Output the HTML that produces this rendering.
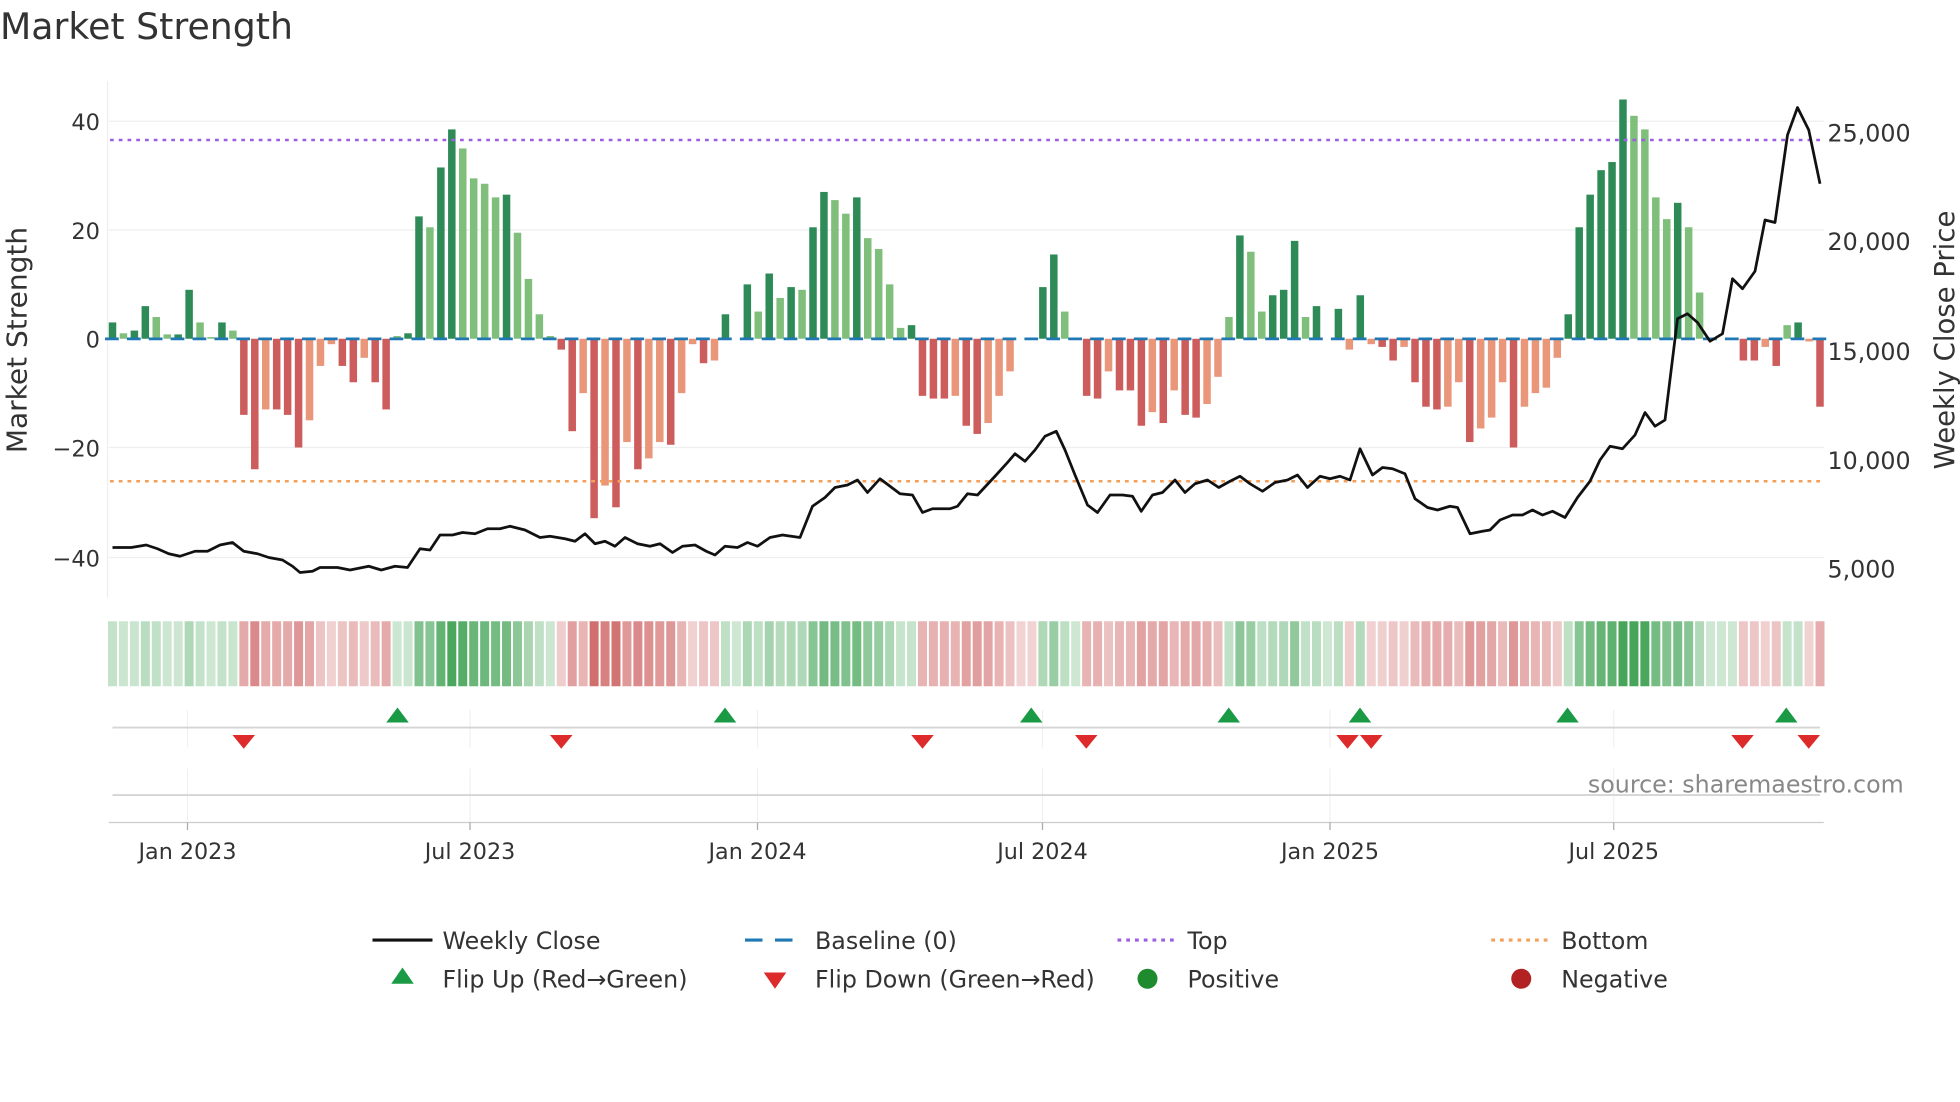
<!DOCTYPE html>
<html><head><meta charset="utf-8"><style>
html,body{margin:0;padding:0;background:#fff;}
svg{display:block;font-family:"DejaVu Sans","Liberation Sans",sans-serif;}
</style></head><body>
<svg id="s" width="1960" height="1102" viewBox="0 0 1568 881.6" xmlns="http://www.w3.org/2000/svg">
<rect width="1568" height="881.6" fill="#fff"/>
<text x="0" y="31" font-size="29" fill="#333">Market Strength</text>
<g stroke="#eeeeee" stroke-width="1">
<line x1="87" x2="1459" y1="97" y2="97"/><line x1="87" x2="1459" y1="184" y2="184"/>
<line x1="87" x2="1459" y1="358" y2="358"/><line x1="87" x2="1459" y1="446" y2="446"/>
<line x1="86" x2="86" y1="65" y2="478"/>
</g>
<g font-size="18" fill="#333" text-anchor="end">
<text x="80" y="104">40</text><text x="80" y="191">20</text><text x="80" y="278">0</text>
<text x="80" y="365">−20</text><text x="80" y="453">−40</text>
</g>
<g font-size="19" fill="#333">
<text x="1462" y="113">25,000</text><text x="1462" y="200">20,000</text><text x="1462" y="288">15,000</text>
<text x="1462" y="375">10,000</text><text x="1462" y="462">5,000</text>
</g>
<text transform="translate(21,272) rotate(-90)" font-size="22.4" fill="#333" text-anchor="middle">Market Strength</text>
<text transform="translate(1563,272) rotate(-90)" font-size="22" fill="#333" text-anchor="middle">Weekly Close Price</text>
<g id="bars"></g>
<line x1="88" x2="1458" y1="112" y2="112" stroke="#9c5fe0" stroke-width="2" stroke-dasharray="3,4"/>
<line x1="88" x2="1458" y1="385" y2="385" stroke="#f4a05a" stroke-width="2" stroke-dasharray="3,4"/>
<polyline id="price" fill="none" stroke="#111" stroke-width="2.2" stroke-linejoin="round"/>
<g id="strip"></g>
<g stroke="#f0f0f0" stroke-width="1">
<line x1="150" x2="150" y1="568" y2="598"/><line x1="376" x2="376" y1="568" y2="598"/><line x1="606" x2="606" y1="568" y2="598"/><line x1="834" x2="834" y1="568" y2="598"/><line x1="1064" x2="1064" y1="568" y2="598"/><line x1="1291" x2="1291" y1="568" y2="598"/>
<line x1="150" x2="150" y1="615" y2="657"/><line x1="376" x2="376" y1="615" y2="657"/><line x1="606" x2="606" y1="615" y2="657"/><line x1="834" x2="834" y1="615" y2="657"/><line x1="1064" x2="1064" y1="615" y2="657"/><line x1="1291" x2="1291" y1="615" y2="657"/>
</g>
<line x1="90" x2="1456" y1="582" y2="582" stroke="#d5d5d5" stroke-width="1.5"/>
<line x1="90" x2="1456" y1="636" y2="636" stroke="#d5d5d5" stroke-width="1.5"/>
<line x1="87" x2="1459" y1="658" y2="658" stroke="#ccc" stroke-width="1"/>
<g id="flips"></g>
<text x="1523" y="634" font-size="19" fill="#888" text-anchor="end">source: sharemaestro.com</text>
<g stroke="#aaa"><line x1="150" x2="150" y1="658" y2="664"/><line x1="376" x2="376" y1="658" y2="664"/><line x1="606" x2="606" y1="658" y2="664"/><line x1="834" x2="834" y1="658" y2="664"/><line x1="1064" x2="1064" y1="658" y2="664"/><line x1="1291" x2="1291" y1="658" y2="664"/></g>
<g font-size="17.8" fill="#333" text-anchor="middle">
<text x="150" y="687">Jan 2023</text><text x="376" y="687">Jul 2023</text><text x="606" y="687">Jan 2024</text>
<text x="834" y="687">Jul 2024</text><text x="1064" y="687">Jan 2025</text><text x="1291" y="687">Jul 2025</text>
</g>
<g font-size="19" fill="#333">
<line x1="298" x2="346" y1="752" y2="752" stroke="#111" stroke-width="2.5"/><text x="354" y="759">Weekly Close</text>
<line x1="596" x2="644" y1="752" y2="752" stroke="#1f77b4" stroke-width="2.5" stroke-dasharray="14,10"/><text x="652" y="759">Baseline (0)</text>
<line x1="894" x2="942" y1="752" y2="752" stroke="#9c5fe0" stroke-width="2.5" stroke-dasharray="3,4"/><text x="950" y="759">Top</text>
<line x1="1193" x2="1241" y1="752" y2="752" stroke="#f4a05a" stroke-width="2.5" stroke-dasharray="3,4"/><text x="1249" y="759">Bottom</text>
<polygon points="322,774 331,787 313,787" fill="#1a9a45"/><text x="354" y="790">Flip Up (Red→Green)</text>
<polygon points="611,778 629,778 620,791" fill="#dd2a2a"/><text x="652" y="790">Flip Down (Green→Red)</text>
<circle cx="918" cy="783" r="8" fill="#1e8c2e"/><text x="950" y="790">Positive</text>
<circle cx="1217" cy="783" r="8" fill="#b22222"/><text x="1249" y="790">Negative</text>
</g>
</svg>
<script>
var v=[3,1,1.5,6,4,0.8,0.8,9,3,0.3,3,1.5,-14,-24,-13,-13,-14,-20,-15,-5,-1,-5,-8,-3.5,-8,-13,0.5,1,22.5,20.5,31.5,38.5,35,29.5,28.5,26,26.5,19.5,11,4.5,0.5,-2,-17,-10,-33,-27,-31,-19,-24,-22,-19,-19.5,-10,-1,-4.5,-4,4.5,0,10,5,12,7.5,9.5,9,20.5,27,25.5,23,26,18.5,16.5,10,2,2.5,-10.5,-11,-11,-10.5,-16,-17.5,-15.5,-10.5,-6,0,0,9.5,15.5,5,0,-10.5,-11,-6,-9.5,-9.5,-16,-13.5,-15.5,-9.5,-14,-14.5,-12,-7,4,19,16,5,8,9,18,4,6,0,5.5,-2,8,-1,-1.5,-4,-1.5,-8,-12.5,-13,-12.5,-8,-19,-16.5,-14.5,-8,-20,-12.5,-10,-9,-3.5,4.5,20.5,26.5,31,32.5,44,41,38.5,26,22,25,20.5,8.5,0,0,0,-4,-4,-1.5,-5,2.5,3,-0.5,-12.5];
var NS="http://www.w3.org/2000/svg",n=v.length,step=(1456-90)/(n-1);
function el(t,a,p){var e=document.createElementNS(NS,t);for(var k in a)e.setAttribute(k,a[k]);p.appendChild(e);return e;}
var B=document.getElementById('bars'),S=document.getElementById('strip');
var reg=1;
for(var i=0;i<n;i++){var x=90+i*step,y0=271,val=v[i],h=Math.abs(val)*4.35;
 var prev=i?Math.abs(v[i-1]):0,dark=Math.abs(val)>=prev;
 var col=val>=0?(dark?'#2e8b57':'#7fbf7b'):(dark?'#cd5c5c':'#e9967a');
 if(h>0.3)el('rect',{x:x-3,y:val>=0?y0-h:y0,width:6,height:h,fill:col},B);
 if(i%2==0)el('rect',{x:x-6,y:270,width:11,height:2.2,fill:'#1f77b4'},B);
 if(val>0.2)reg=1;else if(val<-0.2)reg=-1;
 var a=0.25+Math.min(Math.abs(val),40)/40*0.7;
 var c=reg>0?'rgba(60,160,80,'+a+')':'rgba(200,80,80,'+a+')';
 el('rect',{x:x-3.6,y:497,width:7.2,height:52,fill:c},S);}
var p=[90,438,105,438,117,436,126,439,135,443,144,445,156,441,166,441,176,436,186,434,195,441,206,443,215,446,226,448,234,453,240,458,250,457,256,454,270,454,280,456,295,453,305,456,316,453,326,454,336,439,344,440,352,428,362,428,370,426,380,427,390,423,400,423,408,421,420,424,432,430,440,429,452,431,460,433,468,427,476,435,484,433,492,437,500,430,510,435,520,437,528,435,538,442,546,437,556,436,565,441,572,444,580,437,590,438,598,434,606,437,616,430,626,428,640,430,650,405,660,398,668,390,678,388,686,384,694,394,704,383,712,389,720,395,730,396,738,410,746,407,760,407,766,405,774,395,782,396,796,381,806,370,812,363,820,369,828,360,836,349,845,345,852,360,860,380,870,404,878,410,888,396,898,396,906,397,913,409,922,396,930,394,940,384,948,394,956,387,966,384,975,390,984,385,992,381,1000,387,1010,393,1020,386,1030,384,1038,380,1046,390,1056,381,1064,383,1072,381,1080,384,1088,359,1098,380,1106,374,1114,375,1124,379,1132,399,1142,406,1150,408,1160,405,1166,406,1176,427,1186,425,1192,424,1200,416,1210,412,1218,412,1226,408,1234,412,1242,409,1252,414,1262,398,1272,385,1280,368,1288,357,1298,359,1308,348,1316,330,1324,341,1332,336,1342,255,1350,251,1358,258,1368,273,1378,267,1386,223,1394,231,1404,217,1412,176,1420,178,1430,108,1438,86,1447,104,1456,147];
var pts=[];for(var j=0;j<p.length;j+=2)pts.push(p[j]+','+p[j+1]);
document.getElementById('price').setAttribute('points',pts.join(' '));
var F=document.getElementById('flips');
[318,580,825,983,1088,1254,1429].forEach(function(x){el('polygon',{points:(x)+',566 '+(x+9)+',578 '+(x-9)+',578',fill:'#1a9a45'},F);});
[195,449,738,869,1078,1097,1394,1447].forEach(function(x){el('polygon',{points:(x-9)+',588 '+(x+9)+',588 '+x+',599',fill:'#dd2a2a'},F);});
</script>
</body></html>
